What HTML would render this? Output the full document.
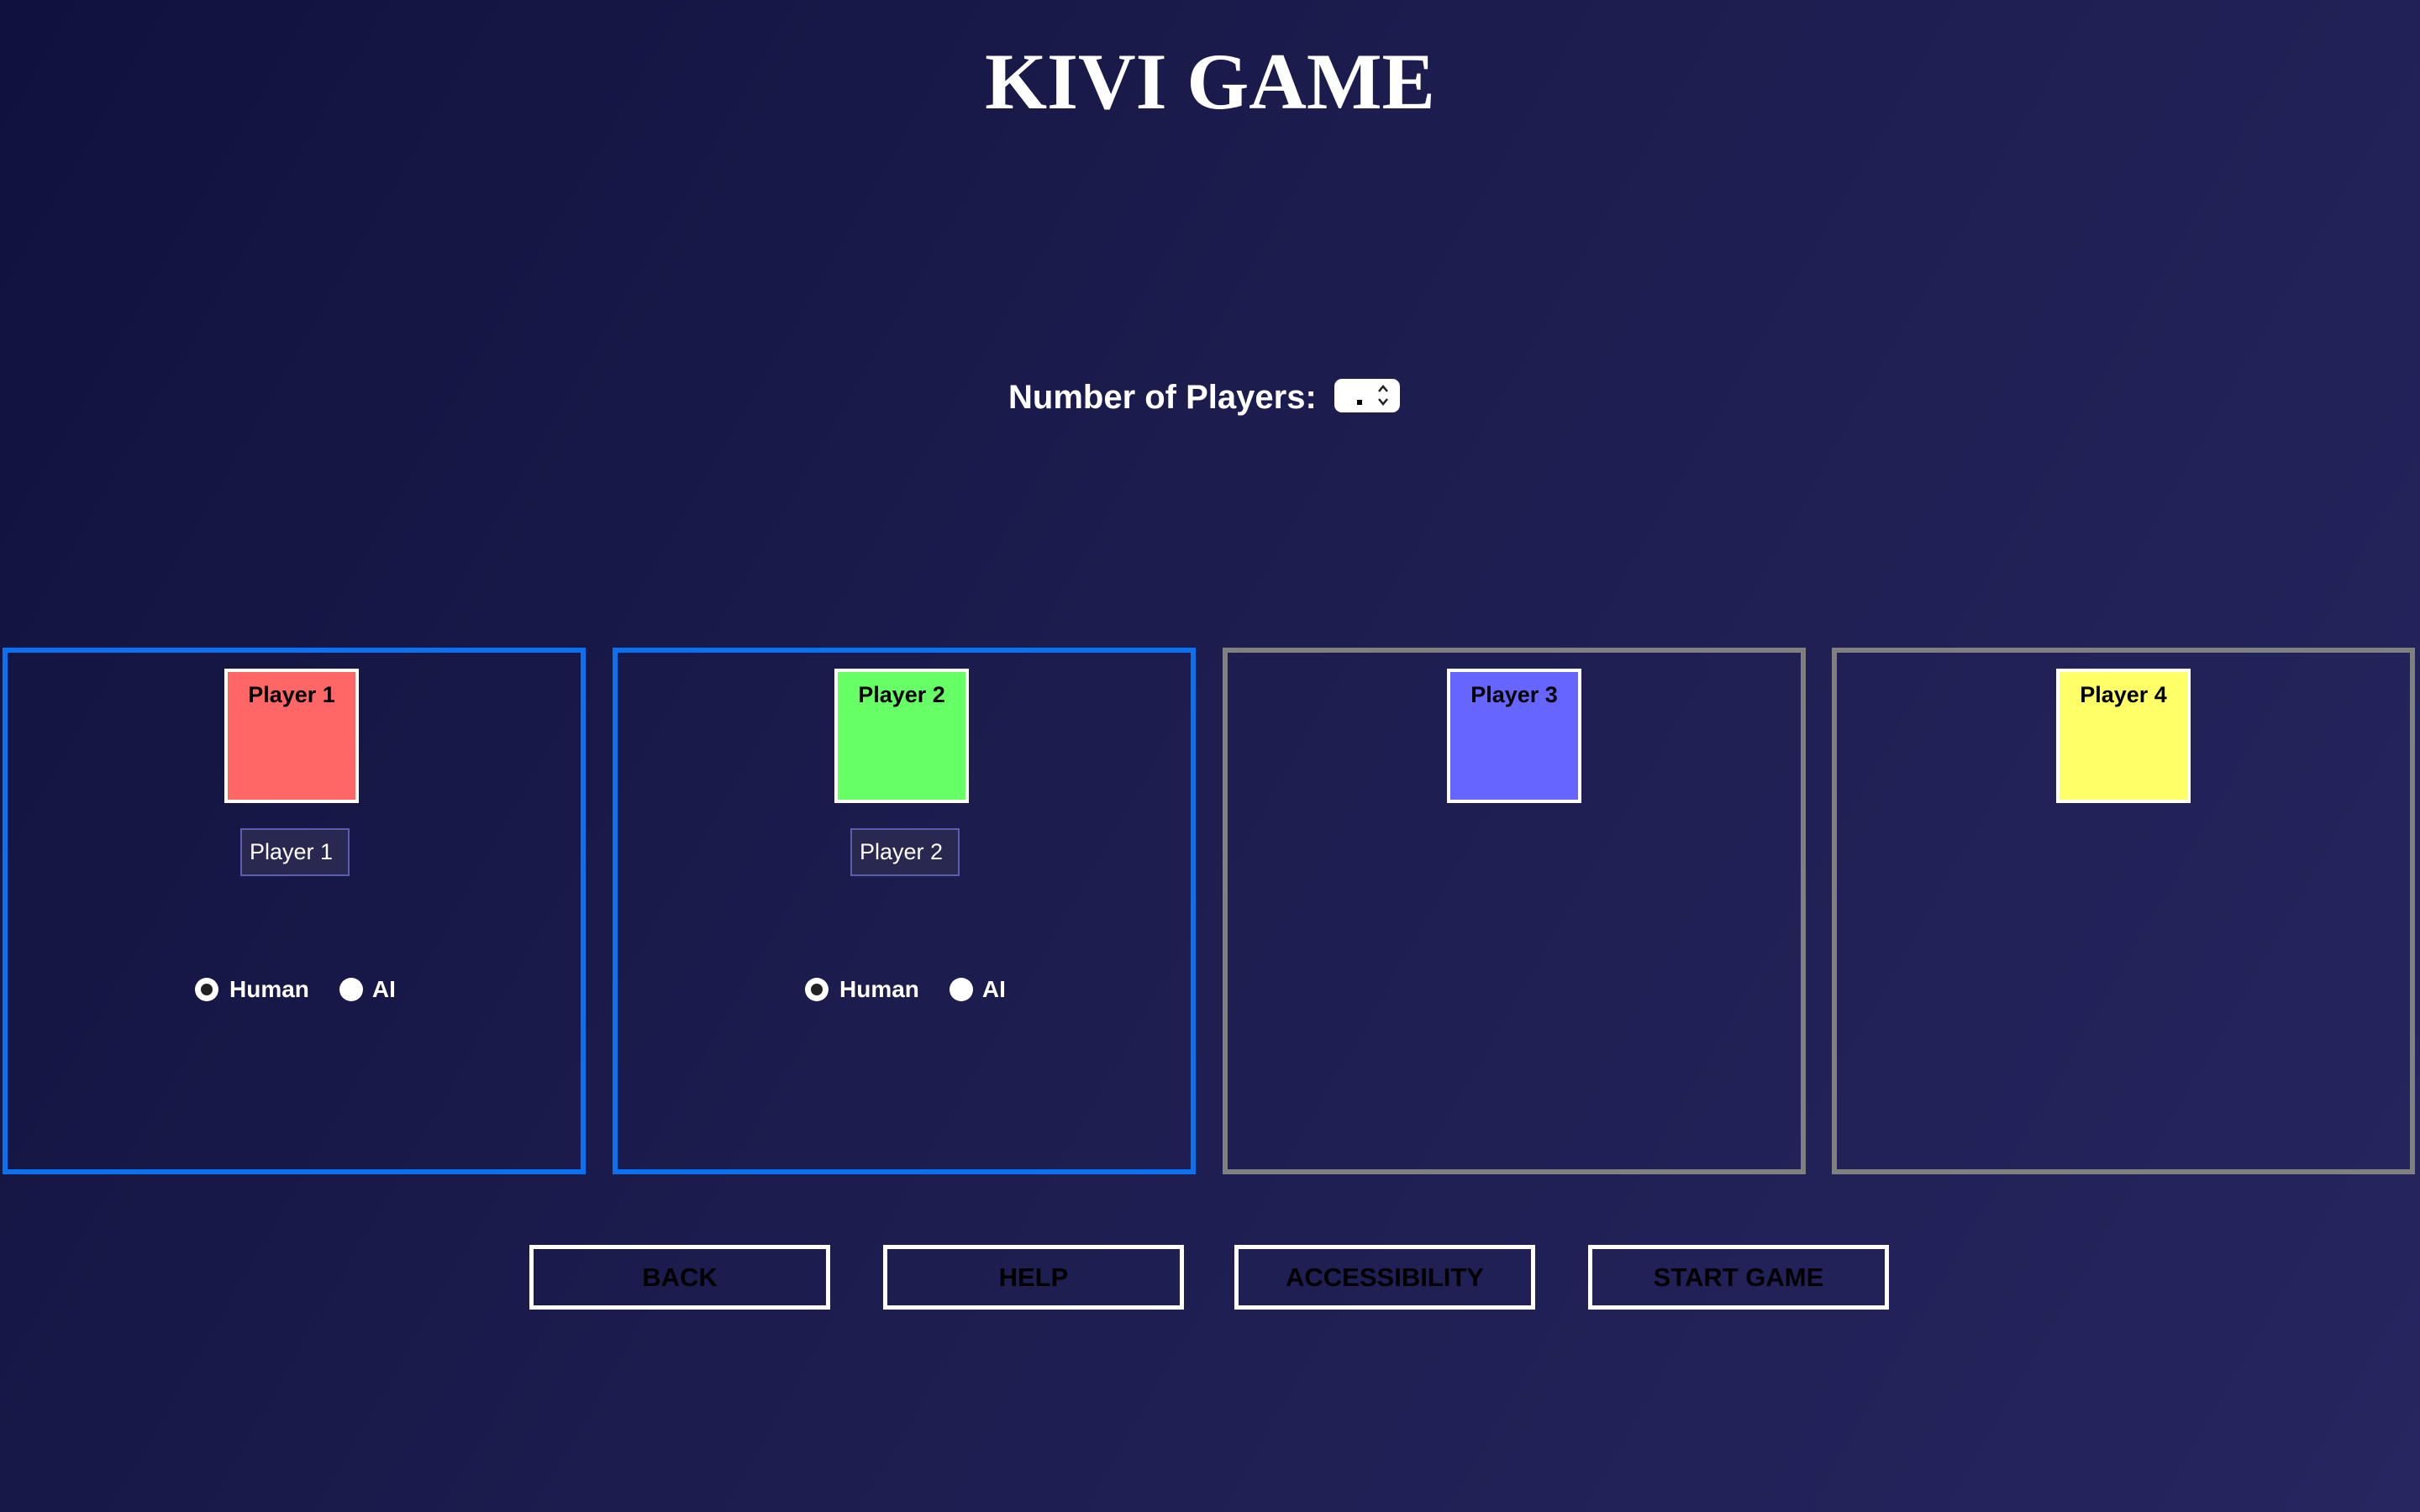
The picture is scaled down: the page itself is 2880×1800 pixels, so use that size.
<!DOCTYPE html>
<html><head><meta charset="utf-8"><style>
html,body{margin:0;padding:0;width:2880px;height:1800px;overflow:hidden}
body{background:linear-gradient(120deg,#10123d 0%,#1c1c4e 45%,#262660 100%);font-family:"Liberation Sans",Arial,sans-serif;position:relative}
.t{position:absolute;left:0;width:2880px;top:42px;text-align:center;font-family:"Liberation Serif",serif;font-weight:bold;font-size:95px;color:#fff;line-height:110px}
.np{position:absolute;left:1200px;top:445px;font-weight:bold;font-size:40px;color:#fff;line-height:56px}
.sel{position:absolute;left:1588px;top:451px;width:78px;height:40px;background:#fff;border-radius:9px}
.sel .d{position:absolute;left:27px;top:25px;width:6px;height:6px;background:#000}
.p{position:absolute;top:771px;width:682px;height:615px;border:6px solid #0a72f0}
.p.g{border-color:#808080}
.box{position:absolute;left:258px;top:19px;width:152px;height:152px;border:4px solid #fff;text-align:center;font-weight:bold;font-size:27px;color:#000;line-height:30px}
.box span{display:block;margin-top:12px}
.in{position:absolute;left:277px;top:209px;width:130px;height:57px;box-sizing:border-box;border:2px solid #5c5cb0;background:#282850;color:#fff;font-size:27px;line-height:53px;padding-left:9px}
.r{position:absolute;top:384px;left:223px;font-weight:bold;font-size:28px;color:#fff;line-height:34px;white-space:nowrap}
.c{display:inline-block;width:28px;height:28px;border-radius:50%;background:#fff;vertical-align:-5px;position:relative}
.c.on::after{content:"";position:absolute;left:7px;top:7px;width:14px;height:14px;border-radius:50%;background:#222}
.b{position:absolute;top:1482px;width:358px;height:77px;box-sizing:border-box;border:5px solid #fff;text-align:center;font-weight:bold;font-size:31px;line-height:67px;color:#000}
</style></head><body>
<div class="t">KIVI GAME</div>
<div class="np">Number of Players:</div>
<div class="sel"><div class="d"></div><svg style="position:absolute;left:50px;top:5px" width="16" height="30" viewBox="0 0 16 30"><path d="M3 10 L8 4 L13 10 M3 19 L8 25 L13 19" stroke="#222" stroke-width="2.5" fill="none"/></svg></div>

<div class="p" style="left:3px"><div class="box" style="background:#ff6666"><span>Player 1</span></div><div class="in">Player 1</div>
<div class="r"><span class="c on"></span><span style="margin-left:13px">Human</span><span class="c" style="margin-left:36px"></span><span style="margin-left:11px">AI</span></div></div>
<div class="p" style="left:729px"><div class="box" style="background:#66ff66"><span>Player 2</span></div><div class="in">Player 2</div>
<div class="r"><span class="c on"></span><span style="margin-left:13px">Human</span><span class="c" style="margin-left:36px"></span><span style="margin-left:11px">AI</span></div></div>
<div class="p g" style="left:1455px"><div class="box" style="background:#6666ff;left:261px"><span>Player 3</span></div></div>
<div class="p g" style="left:2180px"><div class="box" style="background:#ffff66;left:261px"><span>Player 4</span></div></div>

<div class="b" style="left:630px">BACK</div>
<div class="b" style="left:1051px">HELP</div>
<div class="b" style="left:1469px">ACCESSIBILITY</div>
<div class="b" style="left:1890px">START GAME</div>
</body></html>
